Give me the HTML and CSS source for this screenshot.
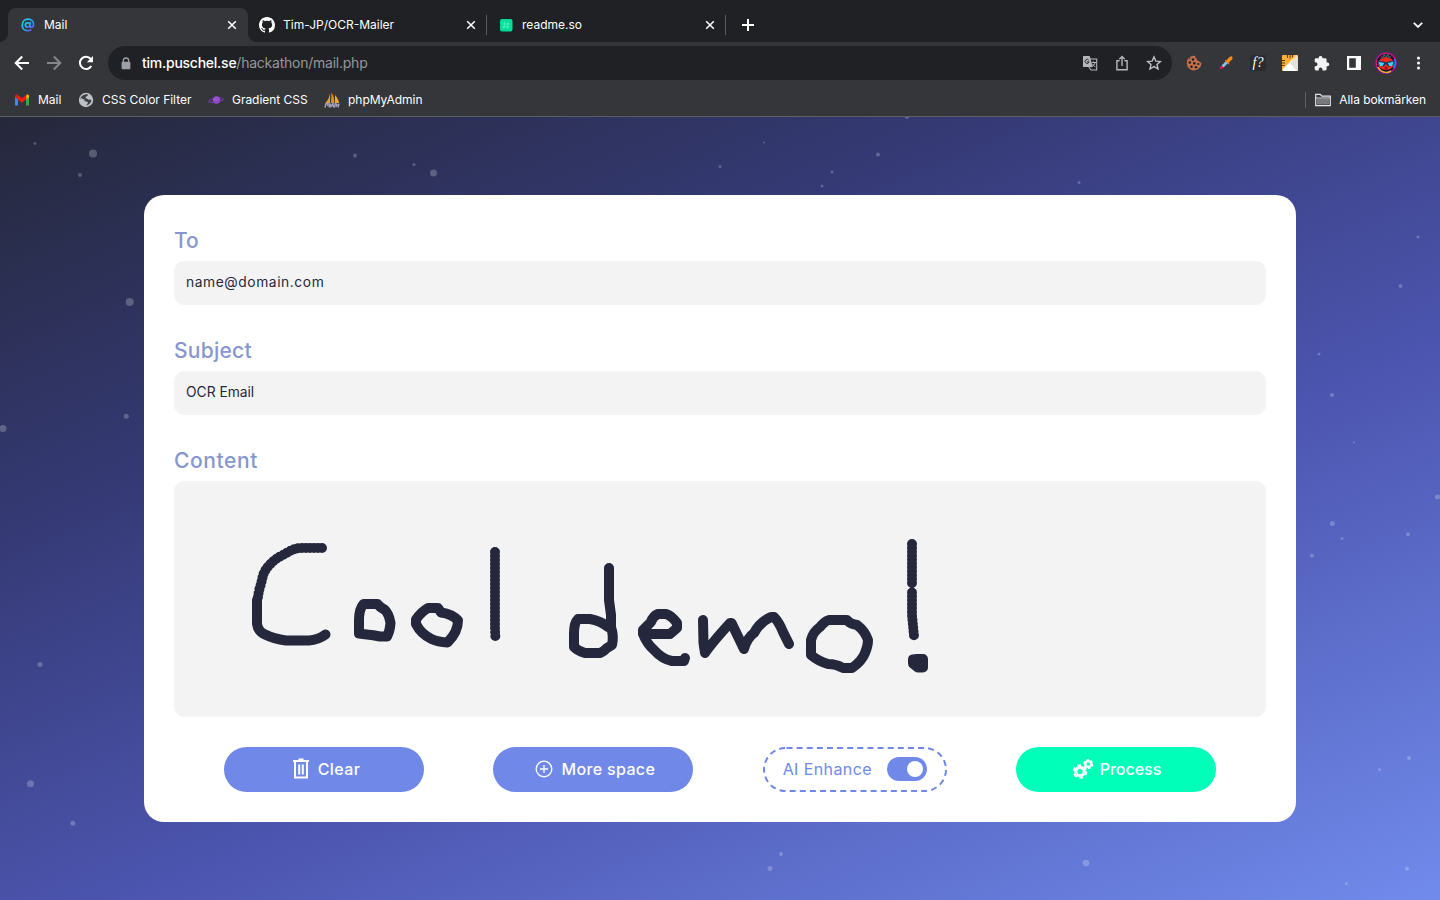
FILE: index.html
```html
<!DOCTYPE html>
<html lang="sv">
<head>
<meta charset="utf-8">
<title>Mail</title>
<link rel="stylesheet" href="styles.css">
</head>
<body>
<header class="chrome">
  <div class="tabs">
    <div class="tab tab-active">
      <span class="fav"><svg width="16" height="16" viewBox="0 0 16 16" fill="none" stroke="url(#atg)" stroke-width="1.700" stroke-linecap="round"><defs><linearGradient id="atg" x1="0" y1="0" x2="1" y2="1"><stop offset=".2" stop-color="#18cdf2"/><stop offset=".6" stop-color="#2c9df5"/><stop offset="1" stop-color="#8a3df0"/></linearGradient></defs><circle cx="7.600" cy="8" r="2.200"/><path d="M10.200 5.500 9.700 9.100c-.2 1.600 3.800 1.700 3.900-1.500C13.600 4.400 11.300 2.200 8.200 2.200 4.700 2.200 2.200 4.700 2.200 8.200c0 3.200 2.200 5.500 5.400 5.500 1.300 0 2.300-.2 3.200-.7"/></svg></span>
      <span class="tab-title">Mail</span>
      <svg class="close" viewBox="0 0 10 10"><path d="M1.200 1.200l7.600 7.600M8.800 1.200 1.200 8.800"/></svg>
    </div>
    <div class="tab">
      <span class="fav"><svg width="16" height="16" viewBox="0 0 16 16" fill="#fff"><path d="M8 0C3.580 0 0 3.580 0 8c0 3.540 2.290 6.530 5.470 7.590.4.070.55-.17.55-.38 0-.19-.01-.82-.01-1.490-2.010.37-2.530-.49-2.690-.94-.09-.23-.48-.94-.82-1.130-.28-.15-.68-.52-.01-.53.63-.01 1.080.58 1.230.82.72 1.210 1.870.87 2.330.66.070-.52.280-.87.510-1.070-1.780-.2-3.640-.89-3.640-3.950 0-.87.310-1.590.82-2.150-.08-.2-.36-1.020.080-2.120 0 0 .67-.21 2.200.82.64-.18 1.320-.27 2-.27s1.360.090 2 .27c1.530-1.040 2.200-.82 2.200-.82.440 1.100.160 1.920.080 2.120.510.560.820 1.270.820 2.150 0 3.070-1.870 3.750-3.650 3.950.290.250.540.730.540 1.480 0 1.070-.01 1.930-.01 2.200 0 .210.150.460.550.380A8.010 8.010 0 0 0 16 8c0-4.420-3.580-8-8-8z"/></svg></span>
      <span class="tab-title">Tim-JP/OCR-Mailer</span>
      <svg class="close" viewBox="0 0 10 10"><path d="M1.200 1.200l7.600 7.600M8.800 1.200 1.200 8.800"/></svg>
    </div>
    <div class="tab">
      <span class="fav"><svg width="16" height="16" viewBox="0 0 16 16"><rect x="2" y="2" width="12.500" height="12.500" rx="2" fill="#05dc9a"/><path d="M6.800 4.500 5.800 12M10.300 4.500 9.300 12M4.500 7h7.500M4 9.800h7.500" stroke="#4df0bc" stroke-width=".9"/></svg></span>
      <span class="tab-title">readme.so</span>
      <svg class="close" viewBox="0 0 10 10"><path d="M1.200 1.200l7.600 7.600M8.800 1.200 1.200 8.800"/></svg>
    </div>
    <svg class="new-tab" viewBox="0 0 12 12"><path d="M6 0v12M0 6h12"/></svg>
    <svg class="chevron" viewBox="0 0 10 6"><path d="M.8.8 5 4.900 9.200.8"/></svg>
  </div>
  <div class="toolbar">
    <span class="cell"><svg width="16" height="16" viewBox="0 0 16 16" class="line white"><path d="M15 8H2M8.200 1.500 1.700 8l6.500 6.500"/></svg></span>
    <span class="cell"><svg width="16" height="16" viewBox="0 0 16 16" class="line dim"><path d="M1 8h13M7.800 1.500 14.300 8l-6.500 6.500"/></svg></span>
    <span class="cell"><svg width="16" height="16" viewBox="0 0 16 16" class="line white"><path d="M13.300 11A6.100 6.100 0 1 1 12.700 4"/><path d="M15 1v6.200H8.800z" fill="#fff" stroke="none"/></svg></span>
    <div class="omnibox">
      <svg class="lock" viewBox="0 0 10 13"><path d="M2.300 6V3.700a2.700 2.700 0 0 1 5.400 0V6" fill="none" stroke="#9aa0a6" stroke-width="1.300"/><rect x=".6" y="4.800" width="8.800" height="7.500" rx="1" fill="#9aa0a6"/></svg>
      <span class="url"><b>tim.puschel.se</b>/hackathon/mail.php</span>
      <span class="cell first"><svg width="16" height="16" viewBox="0 0 16 16"><path d="M7 4h7.700v11H9l-2-3z" fill="none" stroke="#b4b7ba" stroke-width="1.100"/><path d="M1 1h6.700l3 11H1z" fill="#b4b7ba"/><path d="M6.800 5.200a2 2 0 1 0 .3 1.700H5" fill="none" stroke="#292a2d" stroke-width="1"/><path d="M9.500 7.500H14M11.700 6.500v1M13 7.600c-.4 2-1.700 3.300-3.200 4M10.400 8.800c.8 1.400 1.900 2.500 3 3" fill="none" stroke="#b4b7ba"/></svg></span>
      <span class="cell"><svg width="16" height="16" viewBox="0 0 16 16" fill="none" stroke="#b4b7ba" stroke-width="1.400"><path d="M5.500 5.700H2.900v9h10.200v-9h-2.600M8 11V1.800M5.300 4.200 8 1.500l2.700 2.700"/></svg></span>
      <span class="cell"><svg width="16" height="16" viewBox="0 0 16 16" fill="none" stroke="#c4c7c9" stroke-width="1.300"><path d="M8 1.800l1.850 4.250 4.650.4-3.500 3.050 1.050 4.500L8 11.600 3.950 14 5 9.500 1.500 6.450l4.650-.4z"/></svg></span>
    </div>
    <div class="extensions">
      <span class="cell"><svg width="16" height="16" viewBox="0 0 16 16"><path d="M7.500.8A7.300 7.300 0 1 0 15.300 7.200c-1 .5-2.200-.1-2.300-1.200-1.700.1-2.500-1-2-2.300C9.600 3.700 8.900 2.500 9.300 1z" fill="#c4704a"/><path d="M3.300 2.200l1.400 1.100-1.800 1z" fill="#35363a"/><g fill="#231f20"><circle cx="7" cy="4.500" r="1.300"/><circle cx="3.800" cy="7.500" r="1.300"/><circle cx="8.300" cy="8.300" r="1.300"/><circle cx="12.300" cy="9" r="1.100"/><circle cx="5.500" cy="11.700" r="1.300"/><circle cx="10" cy="12.200" r="1.200"/></g></svg></span>
      <span class="cell"><svg width="16" height="16" viewBox="0 0 16 16" stroke-linecap="round"><path d="M3 13 5 11" stroke="#f0134f" stroke-width="2.400"/><path d="M4.600 11.400 9 7" stroke="#83c4f5" stroke-width="2.800" stroke-linecap="butt"/><path d="M7.500 5.500l3.300 3.300" stroke="#e9790c" stroke-width="1.300"/><path d="M10 6l3-3" stroke="#ff8a0a" stroke-width="3.200"/></svg></span>
      <span class="cell"><span class="fq">f?</span></span>
      <span class="cell"><svg width="16" height="16" viewBox="0 0 16 16"><rect width="16" height="16" rx="1.500" fill="#f5f3ee"/><path d="M0 1.500A1.500 1.500 0 0 1 1.500 0H14L0 15z" fill="#ffae35"/><path d="M8 8 14 0h.5A1.500 1.500 0 0 1 16 1.500z" fill="#ffd28e"/><path d="M16 2v12.500a1.500 1.500 0 0 1-1.500 1.500L8 8.500z" fill="#e3e1de"/><path d="M8 8.500 15 16H1z" fill="#fff"/><path d="M5.500 0v3M8 0v3.500M10.500 0v2.500M0 5.500h3M0 8h3M0 10.500h2.500" stroke="#5b3d12" stroke-width="1"/></svg></span>
      <span class="cell"><svg width="16" height="16" viewBox="0 0 16 16" fill="#f1f3f4"><path d="M13.500 7.600h-.9V4.700c0-.8-.6-1.400-1.400-1.400H8.400v-.8a1.900 1.900 0 0 0-3.700 0v.8H2c-.7 0-1.300.6-1.300 1.400v2.600h.8a2 2 0 0 1 0 4H.7V14c0 .8.6 1.400 1.300 1.400h2.700v-.9a1.900 1.900 0 0 1 3.800 0v.9h2.700c.8 0 1.400-.6 1.400-1.400v-2.800h.9a1.800 1.800 0 0 0 0-3.600z"/></svg></span>
      <span class="cell"><svg width="16" height="16" viewBox="0 0 16 16"><path fill-rule="evenodd" d="M1 1h14v14H1zM3.200 3.200v9.600h6.600V3.200z" fill="#fff"/></svg></span>
      <span class="cell"><svg width="22" height="22" viewBox="0 0 22 22"><circle cx="11" cy="11" r="11" fill="#7b168b"/><circle cx="11" cy="11" r="9.800" fill="#150f2d" stroke="#e81a87" stroke-width="1"/><path d="M3 15a9 9 0 0 0 13 4" fill="none" stroke="#e7b334" stroke-width="1.500"/><path d="M19.500 7a9 9 0 0 1-1 9" fill="none" stroke="#2276ee" stroke-width="2"/><ellipse cx="11" cy="11.500" rx="8" ry="6.500" fill="#ee2b1c"/><path d="M6 4.500l2 1.500 1-3.500 2 2.500 2-2.500 1 3.500 2-1.500" fill="none" stroke="#3f5a50" stroke-width="1.400"/><path d="M2.500 8.800l6 .7 2.500 1 2.500-1 6-.7-1.700 4.900-4.300.8-2.500-2.500-2.500 2.500-4.300-.8z" fill="#103861"/><path d="M3.500 9.800l5.800 1.200-1.800 3H4.800zM12.700 11l5.800-1.200-1.300 4.200h-2.700z" fill="#4fcdf8"/><circle cx="11" cy="16" r="1.500" fill="#8a1017"/></svg></span>
      <span class="cell"><svg width="16" height="16" viewBox="0 0 16 16" fill="#fff"><circle cx="8.500" cy="3" r="1.500"/><circle cx="8.500" cy="8" r="1.500"/><circle cx="8.500" cy="13" r="1.500"/></svg></span>
    </div>
  </div>
  <div class="bookmarks">
    <div class="bm bm-mail"><svg width="16" height="16" viewBox="0 0 16 16"><path d="M1 4v9.500h3V6z" fill="#4285f4"/><path d="M12 6v7.500h3V4z" fill="#34a853"/><path d="M12 4v3.500l3-2.200V4c0-1.300-1.500-2-2.500-1.200z" fill="#fbbc04"/><path d="M1 4v1.300l3 2.200V4L3.500 2.800C2.500 2 1 2.700 1 4z" fill="#c5221f"/><path d="M3.300 2.700 8 6.300l4.300-3.300.2 4.100L8 10.700 3.600 7.300z" fill="#f21c10"/></svg><span>Mail</span></div>
    <div class="bm bm-filter"><svg width="16" height="16" viewBox="0 0 16 16"><circle cx="8" cy="8" r="7.200" fill="#bdc1c6"/><path d="M9.500 2.200c1 1.500-.4 1.900-1.300 2.200-1.300.4-.7 1.800.4 2 1.500.2 1 1.500 2.800 1.200l2 .5c-.3 2.800-2.300 4.900-5 5.300 0-1.500 1.800-1.600 1.500-3C9.600 9.200 7 10 5.400 8.500L2.300 7C2.900 4.200 5.500 2 9.500 2.200z" fill="#3c3d41"/><path d="M2.600 6c1.400-.3 1.600 1 3 1.200 1.300.2 1.400 1 .4 2.200-.7.900-.9 2-2 1.700z" fill="#bdc1c6"/></svg><span>CSS Color Filter</span></div>
    <div class="bm bm-grad"><svg width="16" height="16" viewBox="0 0 16 16"><ellipse cx="8" cy="8.300" rx="7.500" ry="1.900" fill="none" stroke="#673a99" stroke-width="1.200" transform="rotate(-10 8 8)"/><circle cx="8.500" cy="8" r="3.700" fill="#9950d1"/><path d="M2 10c4 .8 9-.3 12-2" fill="none" stroke="#733fa7" stroke-width=".8"/></svg><span>Gradient CSS</span></div>
    <div class="bm bm-php"><svg width="16" height="16" viewBox="0 0 16 16"><path d="M6 1v10H1.500C4 8 5.500 5 6 1z" fill="#f39c26"/><path d="M7.500.5c2 3 3 7 2.800 10.500H7z" fill="#f68b0a"/><path d="M11 3c2 2 3.600 5 4 8h-4z" fill="#f8a23a"/><path d="M1 15.500l1-4 2.400.5-1 2M5 15.500l1-3.500 1 2.500 2-3 .5 4M10.500 15.500l.8-4 1.700 1-.7 2.400M14 15.500l1-4" fill="none" stroke="#a8a1c0" stroke-width="1.400"/></svg><span>phpMyAdmin</span></div>
    <div class="all-bm"><svg width="18" height="16" viewBox="0 0 18 16"><path d="M1.700 13.700V2.300h4.600l1.600 1.800h8.400v9.600z" fill="none" stroke="#e3e5e8" stroke-width="1.200"/><path d="M3 7h12v5.500H3z" fill="#77797c"/><path d="M1.700 6h14.600" stroke="#e3e5e8"/></svg><span>Alla bokmärken</span></div>
  </div>
</header>
<main class="page">
  <svg class="particles" viewBox="0 117 1440 783" fill="#fff" fill-opacity=".23">
    <circle cx="35" cy="143.500" r="1.500"/><circle cx="93" cy="153.500" r="4"/><circle cx="80" cy="175" r="2"/><circle cx="129.700" cy="302" r="4"/><circle cx="126.300" cy="416.300" r="2.500"/><circle cx="3" cy="428.500" r="3.500"/><circle cx="40" cy="664.500" r="2.500"/><circle cx="30.500" cy="783.700" r="3.500"/><circle cx="72.800" cy="823.300" r="2.500"/><circle cx="355" cy="155.500" r="2"/><circle cx="414" cy="164.500" r="1.500"/><circle cx="433.500" cy="173" r="3.500"/><circle cx="720" cy="166.500" r="1.500"/><circle cx="764" cy="142.500" r="1"/><circle cx="832" cy="172" r="1.500"/><circle cx="822" cy="186" r="1.500"/><circle cx="878" cy="154.500" r="2"/><circle cx="907" cy="117" r="2"/><circle cx="1079" cy="182.500" r="1.500"/><circle cx="1418" cy="237" r="1.500"/><circle cx="1400.500" cy="286" r="2"/><circle cx="1319" cy="354" r="1.500"/><circle cx="1332" cy="395" r="2"/><circle cx="1354" cy="442.500" r="1"/><circle cx="1437.500" cy="497" r="2.500"/><circle cx="1332.300" cy="523.500" r="2.500"/><circle cx="1342" cy="538.500" r="1.500"/><circle cx="1408" cy="534.300" r="2"/><circle cx="1312" cy="555.500" r="2"/><circle cx="1409" cy="758" r="2"/><circle cx="1379.500" cy="769.500" r="1.500"/><circle cx="1407" cy="868.700" r="2"/><circle cx="1346.500" cy="883.500" r="1.500"/><circle cx="781" cy="854" r="2"/><circle cx="770" cy="868.500" r="2.500"/><circle cx="1086" cy="863" r="3.300"/>
  </svg>
  <form class="card">
    <label class="label">To</label>
    <div class="field f-to">name@domain.com</div>
    <label class="label l-subject">Subject</label>
    <div class="field">OCR Email</div>
    <label class="label l-content">Content</label>
    <div class="canvas">
      <svg viewBox="174 481 1092 236" fill="none" stroke="#25283d" stroke-width="10" stroke-linecap="round" stroke-linejoin="round">
        <path stroke-dasharray="0 4" d="M322 548H299Q292 549 285 554 276 558 271.500 563 264 570 262.500 577.500L261 584 259 590.500 257.500 600"/>
        <path d="M257 600V624Q258 631 264 634 274 639 286 640.500H309Q318 640 325.500 634.500"/>
        <path d="M363.500 604H377.500Q379.500 607 385 610 389 614 390.500 623 390 631 387 636.500H380Q373 635 367 634.500L359 633.500V620Q359 609 363.500 604z"/>
        <path d="M428 608H438L441 612.500Q452 614 458 620.500 458 632 447.500 642.500 438 642 431.500 639 421 634 416 624V619.500Q421 612 428 608z"/>
        <path stroke-dasharray="0 4" d="M495 552V630L495.500 639"/>
        <path d="M609 568V600L611 615V627Q614 636 612 645L607 648Q603 652 600 653H585Q578 651 574 647V633Q574 623 578 619H590Q601 621 608 627"/>
        <path d="M647 634H670L677 628V623Q672 616 666 614H658Q653 616 651 622L643 630V634Q647 644 654 650 662 659 672 661H684L685 658"/>
        <path d="M703 620 703.500 643 705 653Q711 644 730 623H731.500L744 649Q747 638 754 633 760 622 771 617H774Q779 622 783 632L789 644"/>
        <path d="M829 620H847Q850 624 857 625 865 631 868 640 868 646 865 653 862 661 852 668H843Q836 664 828 664 818 661 811 655V640Q813 632 820 627 825 621 829 620z"/>
        <path stroke-dasharray="0 3.900" d="M912 544V583.500M912 592.500V615L914 636"/>
        <path d="M913 659.500 917 659H923V667.500H918L913 663.500z" fill="#25283d"/>
      </svg>
    </div>
    <div class="actions">
      <div class="btn btn-tool"><svg width="18" height="22" viewBox="0 0 18 22" fill="none" stroke="#fff" stroke-width="2"><path d="M1 3h16M6.500 1.500h5M3 3v16.500h12V3M7.200 6.500v10M10.800 6.500v10"/></svg><span class="b-clear">Clear</span></div>
      <div class="btn btn-tool"><svg width="18" height="18" viewBox="0 0 18 18" fill="none" stroke="#fff" stroke-width="1.300"><circle cx="9" cy="9" r="7.800"/><path d="M9 5v8M5 9h8"/></svg><span class="b-more">More space</span></div>
      <div class="enhance"><svg class="dashes" viewBox="0 0 184 45"><rect x="1" y="1" width="182" height="43" rx="21.500" fill="none" stroke="#7089e8" stroke-width="2" stroke-dasharray="6 4.120" stroke-dashoffset="-1"/></svg><span class="b-ai">AI Enhance</span><span class="toggle"><i></i></span></div>
      <div class="btn btn-go"><svg width="22" height="22" viewBox="0 0 22 22" fill="none" stroke="#fff"><circle cx="8" cy="13.500" r="4.200" stroke-width="3.200"/><circle cx="8" cy="13.500" r="6.200" stroke-width="2.200" stroke-dasharray="3.600 2.893"/><circle cx="16.300" cy="6" r="2.900" stroke-width="2.200"/><circle cx="16.300" cy="6" r="4.300" stroke-width="1.500" stroke-dasharray="2.400 2.100"/></svg><span>Process</span></div>
    </div>
  </form>
</main>
</body>
</html>
```
FILE: styles.css
```css
* { box-sizing: border-box; }
body { margin: 0; width: 1440px; height: 900px; overflow: hidden; display: flex; flex-direction: column; font-family: Inter, "Liberation Sans", sans-serif; }
svg { display: block; flex: none; }
.chrome { height: 117px; background: #35363a; border-bottom: 1px solid #5d5e61; color: #fff; font-size: 12px; white-space: nowrap; }
.tabs { display: flex; height: 42px; padding: 8px 17px 0 8px; background: #202124; }
.tab { display: flex; align-items: center; width: 239px; height: 34px; padding: 0 11px; }
.tab + .tab { position: relative; }
.tab + .tab::after { content: ""; position: absolute; right: 0; top: 7px; width: 1px; height: 20px; background: #5a5c60; }
.tab-active { width: 240px; padding-left: 12px; background: #35363a; border-radius: 8px 8px 0 0; position: relative; }
.tab-active::before, .tab-active::after { content: ""; position: absolute; bottom: 0; width: 8px; height: 8px; }
.tab-active::before { left: -8px; background: radial-gradient(circle at 0 0, #202124 7.500px, #35363a 8px); }
.tab-active::after { right: -8px; background: radial-gradient(circle at 100% 0, #202124 7.500px, #35363a 8px); }
.fav { width: 24px; }
.tab-title { padding-bottom: 2px; }
.close { width: 10px; height: 10px; margin-left: auto; fill: none; stroke: #fff; stroke-width: 1.500; }
.new-tab { width: 12px; height: 12px; margin: 11px 0 0 16px; stroke: #fff; stroke-width: 2; }
.chevron { width: 10px; height: 6px; margin: 14px 0 0 auto; fill: none; stroke: #fff; stroke-width: 1.800; }
.toolbar { display: flex; align-items: center; height: 42px; padding-left: 6px; }
.cell { width: 32px; height: 32px; display: flex; align-items: center; justify-content: center; flex: none; }
.line { fill: none; stroke-width: 2; }
.white { stroke: #fff; }
.dim { stroke: #86878a; }
.omnibox { width: 1064px; height: 34px; margin-left: 6px; padding: 0 2px 0 13px; display: flex; align-items: center; background: #202124; border-radius: 17px; }
.lock { width: 10px; height: 13px; margin-right: 11px; }
.url { padding-bottom: 2px; font-size: 14px; color: #94979b; letter-spacing: -.24px; }
.url b { font-weight: 500; color: #fff; letter-spacing: -.25px; }
.first { margin-left: auto; }
.extensions { display: flex; margin-left: 6px; }
.fq { width: 16px; height: 16px; color: #fff; background: #2b2c2e; font: italic 14px/15px "Liberation Serif", serif; text-align: center; }
.bookmarks { display: flex; height: 32px; padding-left: 14px; align-items: center; }
.bm { display: flex; align-items: center; gap: 8px; letter-spacing: -.03px; }
.bm span, .all-bm span { padding-bottom: 2px; }
.bm-mail { width: 64px; }
.bm-filter { width: 130px; }
.bm-grad { width: 116px; }
.all-bm { display: flex; align-items: center; height: 16px; margin: 0 14px 0 auto; padding-left: 8px; gap: 7px; border-left: 1px solid #606164; letter-spacing: -.07px; }
.page { position: relative; flex: 1; padding: 78px 144px; background: linear-gradient(157deg, #25283a 0%, #343973 29%, #4c55af 60%, #718bec 100%); }
.particles { position: absolute; left: 0; top: 0; width: 1440px; height: 783px; }
.card { position: relative; height: 627px; padding: 30px; background: #fff; border-radius: 20px; }
.label { display: block; height: 36px; line-height: 32px; font-size: 21px; font-weight: 500; color: #8896cf; }
.l-subject { letter-spacing: .25px; }
.l-content { letter-spacing: .6px; }
.field { height: 44px; margin-bottom: 30px; padding: 0 12px; line-height: 43px; font-size: 13.800px; color: #25283d; background: #f3f3f3; border-radius: 10px; }
.f-to { letter-spacing: .58px; }
.canvas { height: 236px; background: #f3f3f3; border-radius: 10px; }
.actions { display: flex; justify-content: space-between; margin-top: 30px; padding: 0 50px; }
.btn { width: 200px; height: 45px; display: flex; align-items: center; justify-content: center; gap: 8px; background: #7089e8; border-radius: 23px; color: #fff; font-size: 16px; font-weight: 500; padding-bottom: 1px; }
.btn span, .b-ai { padding-bottom: 1px; }
.btn-tool { padding-left: 4px; }
.b-clear { letter-spacing: .4px; }
.b-more { letter-spacing: .35px; }
.b-ai { letter-spacing: .4px; }
.btn-go { background: #00ffb8; gap: 6px; padding-left: 1px; }
.enhance { position: relative; width: 184px; height: 45px; padding: 0 20px 1px; display: flex; align-items: center; justify-content: space-between; color: #7089e8; font-size: 16px; }
.dashes { position: absolute; left: 0; top: 0; width: 184px; height: 45px; }
.toggle { width: 40px; height: 24px; padding: 4px; display: flex; justify-content: flex-end; background: #7089e8; border-radius: 12px; }
.toggle i { width: 16px; height: 16px; background: #fff; border-radius: 50%; }
```
